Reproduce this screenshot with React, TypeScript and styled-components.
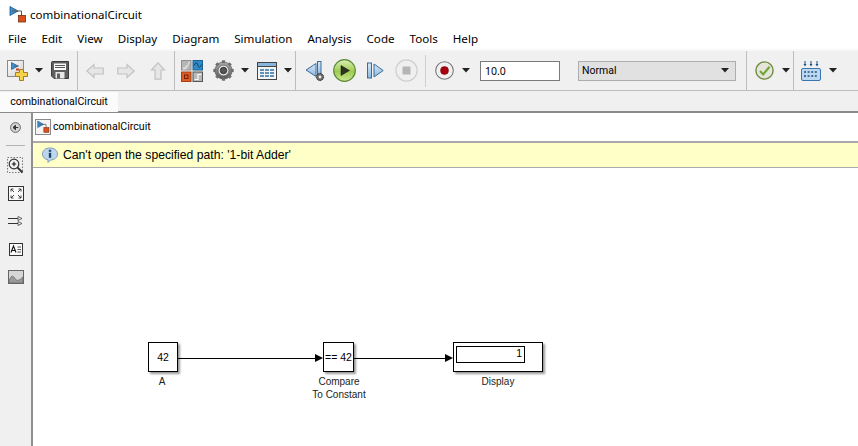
import React from 'react';
import styled, { createGlobalStyle } from 'styled-components';

const GlobalStyle = createGlobalStyle`
  html, body { margin: 0; padding: 0; background: #fff; overflow: hidden; }
  * { box-sizing: border-box; }
  body { font-family: "Noto Sans", "Open Sans", sans-serif; color: #000; }
`;

const menuItems = ['File', 'Edit', 'View', 'Display', 'Diagram', 'Simulation', 'Analysis', 'Code', 'Tools', 'Help'];

const ModelIcon = ({ size = 18 }: { size?: number }) => (
  <svg width={size} height={size} viewBox="0 0 18 18">
    <path d="M1 1.5 L9 6 L1 10.5 Z" fill="#3f8fd0" stroke="#14588f" strokeWidth="0.8" />
    <path d="M3 6 H12.5 V11" fill="none" stroke="#555" strokeWidth="1" />
    <rect x="9.5" y="10.5" width="7" height="6.5" fill="#d9501e" stroke="#7c2d0c" strokeWidth="0.8" />
  </svg>
);

const Caret = () => (
  <svg width="8" height="5" viewBox="0 0 8 5">
    <path d="M0 0 H8 L4 4.5 Z" fill="#222" />
  </svg>
);

const NewIcon = () => (
  <svg width="21" height="21" viewBox="0 0 21 21">
    <defs>
      <linearGradient id="docFill" x1="0" y1="0" x2="1" y2="1">
        <stop offset="0" stopColor="#fdfdfd" />
        <stop offset="1" stopColor="#d2d2d2" />
      </linearGradient>
    </defs>
    <rect x="0.5" y="0.5" width="16" height="16" fill="url(#docFill)" stroke="#8a8a8a" />
    <path d="M4.5 2.5 L11 6 L4.5 9.5 Z" fill="#3f8fd0" stroke="#14588f" strokeWidth="0.7" />
    <path d="M7 6 H12" stroke="#555" strokeWidth="0.7" />
    <rect x="9" y="8.5" width="3" height="2" fill="#c8401a" />
    <path d="M12.5 9.5 H16.5 V12.5 H20.5 V16.5 H16.5 V20.5 H12.5 V16.5 H8.5 V12.5 H12.5 Z" fill="#f7d24f" stroke="#a47f22" />
  </svg>
);

const SaveIcon = () => (
  <svg width="18" height="19" viewBox="0 0 18 19">
    <path d="M0.5 1.5 Q0.5 0.5 1.5 0.5 H17.5 V17.5 H3 L0.5 15 Z" fill="#5f5f5f" stroke="#3a3a3a" />
    <rect x="3" y="2.5" width="12" height="6.5" fill="#fafafa" />
    <path d="M4 4.5 H14 M4 6.5 H14" stroke="#555" strokeWidth="1" />
    <rect x="4.5" y="11" width="9" height="6.5" fill="#e8e8e8" />
    <rect x="6" y="12.5" width="3" height="5" fill="#5f5f5f" />
  </svg>
);

const NavArrow = ({ dir }: { dir: 'left' | 'right' | 'up' }) => {
  const rotate = dir === 'left' ? 0 : dir === 'right' ? 180 : 90;
  return (
    <svg width="18" height="18" viewBox="0 0 18 18">
      <path
        d="M0.8 9 L8 2.5 V6 H17.2 V12 H8 V15.5 Z"
        fill="#e6e6e6"
        stroke="#c2c2c2"
        strokeWidth="1.2"
        transform={`rotate(${rotate} 9 9)`}
      />
    </svg>
  );
};

const LibraryIcon = () => (
  <svg width="22" height="22" viewBox="0 0 22 22">
    <rect x="0.5" y="0.5" width="9.5" height="9.5" fill="#b5b5b5" stroke="#8f8f8f" />
    <path d="M2 9 C5 9 7 6 8.5 1.5" fill="none" stroke="#f4f4f4" />
    <path d="M5 9.5 V5 M3 9.5 V7" stroke="#e4e4e4" />
    <rect x="12" y="0.5" width="9.5" height="9.5" fill="#2f8cc9" stroke="#1c608f" />
    <path d="M13 5.5 C15 1.5 16 2 17 5.5 C18 8.5 19 8 20.5 4.5" fill="none" stroke="#0d3a5c" />
    <rect x="0.5" y="12" width="9.5" height="9.5" fill="#de5c24" stroke="#a8400f" />
    <rect x="3.5" y="15" width="3.5" height="3.5" fill="none" stroke="#6b2407" />
    <rect x="12" y="12" width="9.5" height="9.5" fill="#b9b9b9" stroke="#555" />
    <path d="M13.5 19.5 H17 V14.5 H20.5" fill="none" stroke="#fafafa" strokeWidth="1.2" />
  </svg>
);

const GearIcon = () => (
  <svg width="21" height="21" viewBox="0 0 21 21">
    <defs>
      <linearGradient id="gearFill" x1="0" y1="0" x2="0" y2="1">
        <stop offset="0" stopColor="#a8a8a8" />
        <stop offset="1" stopColor="#5a5a5a" />
      </linearGradient>
    </defs>
    <circle cx="10.5" cy="10.5" r="8.6" fill="url(#gearFill)" stroke="#4a4a4a" strokeWidth="0.6" />
    <g stroke="#6e6e6e" strokeWidth="3.2">
      <path d="M10.5 0.3 V20.7" />
      <path d="M0.3 10.5 H20.7" />
      <path d="M3.3 3.3 L17.7 17.7" />
      <path d="M17.7 3.3 L3.3 17.7" />
    </g>
    <circle cx="10.5" cy="10.5" r="7.6" fill="url(#gearFill)" />
    <circle cx="10.5" cy="10.5" r="5.4" fill="#e2e2e2" stroke="#666" strokeWidth="0.8" />
    <circle cx="10.5" cy="10.5" r="3.2" fill="#555" stroke="#222" strokeWidth="0.8" />
  </svg>
);

const ExplorerIcon = () => (
  <svg width="20" height="18" viewBox="0 0 20 18">
    <rect x="0.5" y="0.5" width="19" height="17" fill="#f4f4f4" stroke="#444" />
    <rect x="1" y="1" width="18" height="3.5" fill="#86b6dd" />
    <path d="M0.5 4.5 H19.5" stroke="#444" />
    <path d="M3 8 H17 M3 11 H17 M3 14 H17" stroke="#2f70a8" strokeWidth="1.4" />
    <path d="M7.5 6.5 V15.5 M12.5 6.5 V15.5" stroke="#f4f4f4" />
  </svg>
);

const StepBackIcon = () => (
  <svg width="20" height="23" viewBox="0 0 20 23">
    <defs>
      <linearGradient id="stepFill" x1="0" y1="0" x2="0" y2="1">
        <stop offset="0" stopColor="#d6e7f6" />
        <stop offset="1" stopColor="#8db8df" />
      </linearGradient>
    </defs>
    <path d="M11 4.5 L1 11 L11 17.5 Z" fill="url(#stepFill)" stroke="#3a6c9a" />
    <rect x="12.5" y="2.5" width="3.5" height="14" fill="url(#stepFill)" stroke="#3a6c9a" />
    <circle cx="15" cy="18" r="3.6" fill="#6a6a6a" stroke="#2e2e2e" strokeDasharray="1.4 0.6" />
    <circle cx="15" cy="18" r="1.4" fill="#eee" />
  </svg>
);

const PlayIcon = () => (
  <svg width="23" height="23" viewBox="0 0 23 23">
    <defs>
      <linearGradient id="playFill" x1="0" y1="0" x2="0" y2="1">
        <stop offset="0" stopColor="#dcefb6" />
        <stop offset="0.55" stopColor="#9ecb50" />
        <stop offset="1" stopColor="#cbe793" />
      </linearGradient>
    </defs>
    <circle cx="11.5" cy="11.5" r="10.8" fill="url(#playFill)" stroke="#5d8a34" strokeWidth="1.2" />
    <path d="M8 6.5 L16.5 11.5 L8 16.5 Z" fill="#2b3320" stroke="#111" strokeWidth="0.5" />
  </svg>
);

const StepForwardIcon = () => (
  <svg width="17" height="17" viewBox="0 0 17 17">
    <defs>
      <linearGradient id="stepFillB" x1="0" y1="0" x2="0" y2="1">
        <stop offset="0" stopColor="#d6e7f6" />
        <stop offset="1" stopColor="#8db8df" />
      </linearGradient>
    </defs>
    <rect x="0.5" y="1" width="4" height="15" fill="url(#stepFillB)" stroke="#3a6c9a" />
    <path d="M7 2 L16.2 8.5 L7 15 Z" fill="url(#stepFillB)" stroke="#3a6c9a" />
  </svg>
);

const StopIcon = () => (
  <svg width="23" height="23" viewBox="0 0 23 23">
    <circle cx="11.5" cy="11.5" r="10.6" fill="#efefef" stroke="#cfcfcf" strokeWidth="1.2" />
    <rect x="7.5" y="7.5" width="8" height="8" fill="#b5b5b5" />
  </svg>
);

const RecordIcon = () => (
  <svg width="19" height="19" viewBox="0 0 19 19">
    <circle cx="9.5" cy="9.5" r="8.8" fill="#f1f1f1" stroke="#777" strokeWidth="1.1" />
    <circle cx="9.5" cy="9.5" r="4" fill="#a8000c" stroke="#6b0008" strokeWidth="0.5" />
  </svg>
);

const CheckIcon = () => (
  <svg width="19" height="19" viewBox="0 0 19 19">
    <circle cx="9.5" cy="9.5" r="8.6" fill="#e4e6dc" stroke="#6f8a3c" strokeWidth="1.4" />
    <path d="M5 10 L8.2 13.4 L14.5 5.8" fill="none" stroke="#74a53a" strokeWidth="2.2" />
  </svg>
);

const KeyboardIcon = () => (
  <svg width="20" height="20" viewBox="0 0 20 20">
    <path d="M4 0 V4 M10 0 V4 M16 0 V4" stroke="#1f4f80" strokeWidth="1" />
    <path d="M2.5 3 H5.5 L4 5.5 Z M8.5 3 H11.5 L10 5.5 Z M14.5 3 H17.5 L16 5.5 Z" fill="#1f4f80" />
    <rect x="0.5" y="7.5" width="19" height="12" rx="1.5" fill="#bcd8f0" stroke="#3b75ad" />
    <path d="M3 11 H17 M3 15 H17" stroke="#1f4f80" strokeWidth="1.6" strokeDasharray="2 1.6" />
  </svg>
);

const BackRoundIcon = () => (
  <svg width="11" height="11" viewBox="0 0 11 11">
    <circle cx="5.5" cy="5.5" r="4.9" fill="#d8d8d8" stroke="#666" />
    <path d="M8.3 5.5 H5 M5.5 3.2 L3 5.5 L5.5 7.8 Z" fill="#333" stroke="#333" />
  </svg>
);

const ZoomIcon = () => (
  <svg width="17" height="17" viewBox="0 0 17 17">
    <rect x="0.5" y="0.5" width="15" height="15" fill="none" stroke="#777" strokeDasharray="1.5 1.5" />
    <circle cx="7" cy="7" r="4.8" fill="#f4f4f4" stroke="#333" strokeWidth="1.2" />
    <path d="M4.8 7 H9.2 M7 4.8 V9.2" stroke="#111" strokeWidth="1.1" />
    <path d="M10.5 10.5 L15.5 15.5" stroke="#333" strokeWidth="1.8" />
  </svg>
);

const FitIcon = () => (
  <svg width="16" height="15" viewBox="0 0 16 15">
    <rect x="0.5" y="0.5" width="15" height="14" fill="#fafafa" stroke="#333" />
    <path d="M3 3 L6 6 M3 3 H5.5 M3 3 V5.5 M13 3 L10 6 M13 3 H10.5 M13 3 V5.5 M3 12 L6 9 M3 12 H5.5 M3 12 V9.5 M13 12 L10 9 M13 12 H10.5 M13 12 V9.5" stroke="#333" strokeWidth="0.9" fill="none" />
  </svg>
);

const RouteIcon = () => (
  <svg width="15" height="10" viewBox="0 0 15 10">
    <path d="M0 2.5 H10 M0 7.5 H10" stroke="#333" />
    <path d="M10 0.5 L14 2.5 L10 4.5 Z M10 5.5 L14 7.5 L10 9.5 Z" fill="#f2f2f2" stroke="#444" strokeWidth="0.8" />
  </svg>
);

const AnnotationIcon = () => (
  <svg width="14" height="13" viewBox="0 0 14 13">
    <rect x="0.5" y="0.5" width="13" height="12" fill="#fafafa" stroke="#333" />
    <path d="M2 9.5 L4.5 3 L7 9.5 M3 7.5 H6" fill="none" stroke="#111" strokeWidth="1.1" />
    <path d="M8.5 4 H12 M8.5 6.5 H12 M8.5 9 H12" stroke="#555" />
  </svg>
);

const ImageIcon = () => (
  <svg width="16" height="14" viewBox="0 0 16 14">
    <rect x="0.5" y="0.5" width="15" height="13" fill="#d6d6d6" stroke="#666" />
    <path d="M1 11 C3 5 5 5 7 8.5 C9 11.5 11 10.5 15 7 V13 H1 Z" fill="#999" stroke="#666" strokeWidth="0.7" />
  </svg>
);

const InfoIcon = () => (
  <svg width="16" height="16" viewBox="0 0 16 16">
    <path d="M8 1 C12.4 1 15.5 3.4 15.5 7 C15.5 10.6 12.4 13 8.5 13 L6 15.5 V12.8 C2.6 12.2 0.5 10 0.5 7 C0.5 3.4 3.6 1 8 1 Z" fill="#bcd6ec" stroke="#7f9db8" />
    <rect x="6.8" y="5.8" width="2.4" height="5" fill="#17456f" />
    <rect x="6.8" y="2.8" width="2.4" height="2" fill="#17456f" />
  </svg>
);

const ArrowHead = styled.span`
  display: block;
  width: 0;
  height: 0;
  border-top: 4px solid transparent;
  border-bottom: 4px solid transparent;
  border-left: 8px solid #000;
`;

const paletteIcons = [<ZoomIcon key="zoom" />, <FitIcon key="fit" />, <RouteIcon key="route" />, <AnnotationIcon key="note" />, <ImageIcon key="image" />];

const App = () => {
  return (
    <Page>
      <GlobalStyle />
      <TitleBar>
        <ModelIcon size={18} />
        <span>combinationalCircuit</span>
      </TitleBar>
      <MenuBar>
        {menuItems.map((item) => (
          <MenuItem key={item}>{item}</MenuItem>
        ))}
      </MenuBar>
      <Toolbar>
        <ToolGroup $width={78} $pad={7}>
          <NewIcon />
          <CaretSlot $left={7} />
          <Spaced $left={8}><SaveIcon /></Spaced>
        </ToolGroup>
        <ToolGroup $width={97} $pad={8}>
          <NavArrow dir="left" />
          <Spaced $left={13}><NavArrow dir="right" /></Spaced>
          <Spaced $left={14}><NavArrow dir="up" /></Spaced>
        </ToolGroup>
        <ToolGroup $width={121} $pad={6}>
          <LibraryIcon />
          <Spaced $left={10}><GearIcon /></Spaced>
          <CaretSlot $left={7} />
          <Spaced $left={8}><ExplorerIcon /></Spaced>
          <CaretSlot $left={7} />
        </ToolGroup>
        <ToolGroup $width={451} $pad={9} $plain>
          <StepBackIcon />
          <Spaced $left={8}><PlayIcon /></Spaced>
          <Spaced $left={11}><StepForwardIcon /></Spaced>
          <Spaced $left={11}><StopIcon /></Spaced>
          <InnerRule />
          <RecordIcon />
          <CaretSlot $left={8} />
          <TimeInput>10.0</TimeInput>
          <ModeSelect>
            <span>Normal</span>
            <Caret />
          </ModeSelect>
          <InnerRuleRight />
        </ToolGroup>
        <ToolGroup $width={47} $pad={8}>
          <CheckIcon />
          <CaretSlot $left={8} />
        </ToolGroup>
        <ToolGroup $width={64} $pad={7} $plain>
          <KeyboardIcon />
          <CaretSlot $left={8} />
        </ToolGroup>
      </Toolbar>
      <TabStrip>
        <Tab>combinationalCircuit</Tab>
      </TabStrip>
      <Workspace>
        <Palette>
          <BackRoundIcon />
          <PaletteRule />
          {paletteIcons.map((icon) => (
            <PaletteSlot key={icon.key}>{icon}</PaletteSlot>
          ))}
        </Palette>
        <Editor>
          <AddressBar>
            <AddressIcon><ModelIcon size={13} /></AddressIcon>
            <span>combinationalCircuit</span>
          </AddressBar>
          <Banner>
            <InfoIcon />
            <span>Can't open the specified path: '1-bit Adder'</span>
          </Banner>
          <Canvas>
            <Block $x={115} $y={174} $w={30}>42</Block>
            <BlockLabel $x={79} $y={207} $w={100}>A</BlockLabel>
            <Wire $x={145} $y={190} $w={137} />
            <WireHead $x={282} $y={186}><ArrowHead /></WireHead>
            <Block $x={290} $y={174} $w={31}>== 42</Block>
            <BlockLabel $x={256} $y={207} $w={100}>Compare<br />To Constant</BlockLabel>
            <Wire $x={321} $y={190} $w={91} />
            <WireHead $x={412} $y={186}><ArrowHead /></WireHead>
            <Block $x={420} $y={174} $w={90}>
              <DisplayValue>1</DisplayValue>
            </Block>
            <BlockLabel $x={415} $y={207} $w={100}>Display</BlockLabel>
          </Canvas>
        </Editor>
      </Workspace>
    </Page>
  );
};

const CaretSlot = ({ $left }: { $left: number }) => (
  <Spaced $left={$left}><Caret /></Spaced>
);

const Page = styled.div`
  width: 858px;
  height: 446px;
  display: flex;
  flex-direction: column;
  overflow: hidden;
  background: #fff;
`;

const TitleBar = styled.div`
  height: 27px;
  flex: none;
  display: flex;
  align-items: center;
  gap: 3px;
  padding: 1px 0 0 9px;
  font-size: 11.5px;
  background: #fff;
`;

const MenuBar = styled.div`
  height: 22px;
  flex: none;
  display: flex;
  align-items: center;
  gap: 15px;
  padding-left: 8px;
  font-size: 11.6px;
  background: #fff;
`;

const MenuItem = styled.span`
  display: block;
`;

const Toolbar = styled.div`
  height: 42px;
  flex: none;
  display: flex;
  background: #f0f0f0;
  border-top: 2px solid #f7f7f7;
  border-bottom: 1px solid #bdbdbd;
`;

const ToolGroup = styled.div<{ $width: number; $pad: number; $plain?: boolean }>`
  width: ${(p) => p.$width}px;
  flex: none;
  display: flex;
  align-items: center;
  padding-left: ${(p) => p.$pad}px;
  border-right: ${(p) => (p.$plain ? 'none' : '1px solid #bdbdbd')};
`;

const Spaced = styled.span<{ $left: number }>`
  display: flex;
  align-items: center;
  margin-left: ${(p) => p.$left}px;
`;

const InnerRule = styled.span`
  width: 1px;
  height: 32px;
  background: #cfcfcf;
  margin: 0 9px 0 7px;
`;

const InnerRuleRight = styled.span`
  width: 1px;
  height: 39px;
  background: #bdbdbd;
  margin-left: 10px;
`;

const TimeInput = styled.div`
  width: 80px;
  height: 20px;
  margin-left: 10px;
  padding-left: 4px;
  background: #fff;
  border: 1px solid #7a7a7a;
  font-size: 10.5px;
  line-height: 18px;
`;

const ModeSelect = styled.div`
  width: 158px;
  height: 20px;
  margin-left: 18px;
  padding: 0 6px 0 3px;
  display: flex;
  align-items: center;
  justify-content: space-between;
  background: #e1e1e1;
  border: 1px solid #adadad;
  font-family: Roboto, sans-serif;
  font-size: 10.5px;
`;

const TabStrip = styled.div`
  height: 22px;
  flex: none;
  display: flex;
  align-items: flex-end;
  background: #f0f0f0;
  border-bottom: 2px solid #8a8a8a;
`;

const Tab = styled.div`
  width: 118px;
  height: 20px;
  margin-bottom: -1px;
  text-align: center;
  font-family: Roboto, sans-serif;
  font-size: 10.6px;
  line-height: 19px;
  background: #fbfbfb;
`;

const Workspace = styled.div`
  flex: 1;
  display: flex;
  min-height: 0;
`;

const Palette = styled.div`
  width: 33px;
  flex: none;
  display: flex;
  flex-direction: column;
  align-items: center;
  padding-top: 9px;
  background: #f0f0f0;
  border-right: 2px solid #8f8f8f;
`;

const PaletteRule = styled.div`
  width: 19px;
  height: 1px;
  margin: 12px 0 5px;
  background: #b4b4b4;
`;

const PaletteSlot = styled.div`
  width: 100%;
  height: 28px;
  flex: none;
  display: flex;
  align-items: center;
  justify-content: center;
`;

const Editor = styled.div`
  flex: 1;
  display: flex;
  flex-direction: column;
  min-width: 0;
`;

const AddressBar = styled.div`
  height: 30px;
  flex: none;
  display: flex;
  align-items: center;
  gap: 2px;
  padding: 0 0 1px 2px;
  font-family: Roboto, sans-serif;
  font-size: 10.6px;
  border-bottom: 2px solid #a9a9a9;
`;

const AddressIcon = styled.span`
  width: 16px;
  height: 16px;
  display: flex;
  align-items: center;
  justify-content: center;
  background: #f4f4f4;
  border: 1px solid #8a8a8a;
`;

const Banner = styled.div`
  height: 25px;
  flex: none;
  display: flex;
  align-items: center;
  gap: 5px;
  padding-left: 9px;
  font-family: "Liberation Sans", Arial, sans-serif;
  font-size: 12.2px;
  background: #ffffc8;
  border-bottom: 1px solid #a9a9a9;
`;

const Canvas = styled.div`
  position: relative;
  flex: 1;
  background: #fff;
`;

const Block = styled.div<{ $x: number; $y: number; $w: number }>`
  position: absolute;
  left: ${(p) => p.$x}px;
  top: ${(p) => p.$y}px;
  width: ${(p) => p.$w}px;
  height: 30px;
  display: flex;
  align-items: center;
  justify-content: center;
  background: #fff;
  border: 1px solid #000;
  box-shadow: 2px 2px 2px #9a9a9a;
  font-family: "Liberation Sans", Arial, sans-serif;
  font-size: 10.5px;
  white-space: nowrap;
`;

const DisplayValue = styled.div`
  position: absolute;
  left: 2px;
  top: 3px;
  width: 69px;
  height: 17px;
  padding-right: 2px;
  text-align: right;
  line-height: 13px;
  border: 1px solid #000;
`;

const BlockLabel = styled.div<{ $x: number; $y: number; $w: number }>`
  position: absolute;
  left: ${(p) => p.$x}px;
  top: ${(p) => p.$y}px;
  width: ${(p) => p.$w}px;
  text-align: center;
  font-family: "Liberation Sans", Arial, sans-serif;
  font-size: 10px;
  line-height: 13px;
  color: #222;
`;

const Wire = styled.div<{ $x: number; $y: number; $w: number }>`
  position: absolute;
  left: ${(p) => p.$x}px;
  top: ${(p) => p.$y}px;
  width: ${(p) => p.$w}px;
  height: 1px;
  background: #000;
`;

const WireHead = styled.div<{ $x: number; $y: number }>`
  position: absolute;
  left: ${(p) => p.$x}px;
  top: ${(p) => p.$y}px;
`;

export default App;
